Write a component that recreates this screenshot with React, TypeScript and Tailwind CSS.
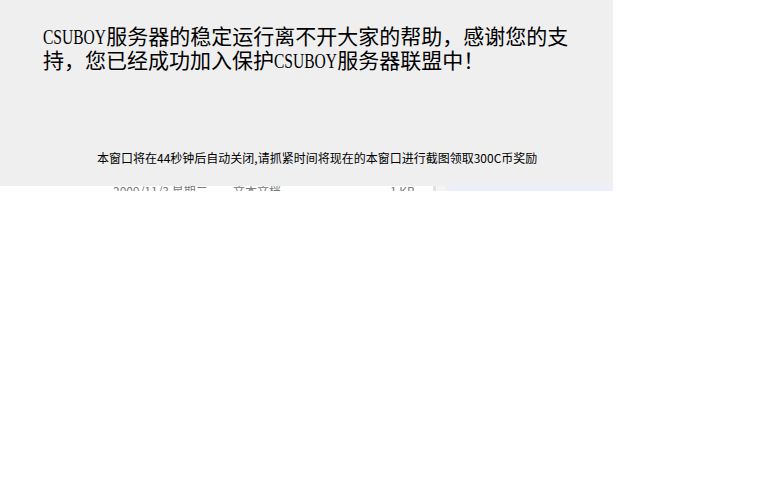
const cjk = '"Noto Sans CJK SC", sans-serif';

function Brand() {
  return (
    <span className="inline-block origin-left scale-x-[0.74] mr-[-22px] font-['Liberation_Serif','Noto_Sans_CJK_SC',serif]">
      CSUBOY
    </span>
  );
}

export default function App() {
  return (
    <div className="w-[768px] h-[480px] bg-white">
      <div className="w-[613px] h-[186px] bg-[#efefef] flex flex-col">
        <div
          className="pl-[43px] pt-[24px] w-[590px] text-[21px] leading-[22px] text-black"
          style={{ fontFamily: cjk }}
        >
          <div>
            <Brand />
            服务器的稳定运行离不开大家的帮助，感谢您的支
          </div>
          <div>
            持，您已经成功加入保护
            <Brand />
            服务器联盟中！
          </div>
        </div>
        <div
          className="mt-auto mb-[21px] pl-[97px] text-[12px] leading-[14px] text-black"
          style={{ fontFamily: cjk }}
        >
          本窗口将在44秒钟后自动关闭,请抓紧时间将现在的本窗口进行截图领取300C币奖励
        </div>
      </div>
      <div className="w-[613px] h-[5px] overflow-hidden flex text-[12px] leading-[12px] text-[#7a7a7a] font-['Noto_Sans_CJK_SC',sans-serif]">
        <div className="w-[113px] bg-white" />
        <div className="w-[120px] -mt-[1px] bg-white">2009/11/3 星期二</div>
        <div className="w-[150px] -mt-[1px] bg-white" >文本文档</div>
        <div className="w-[36px] -mt-[1px] bg-white text-right pr-[4px]">1 KB</div>
        <div className="w-[14px] bg-white" />
        <div className="w-[3px] bg-[#e2e2e2]" />
        <div className="w-[10px] bg-[#f4f4f4]" />
        <div className="flex-1 bg-[#eaf0fb]" />
      </div>
    </div>
  );
}
